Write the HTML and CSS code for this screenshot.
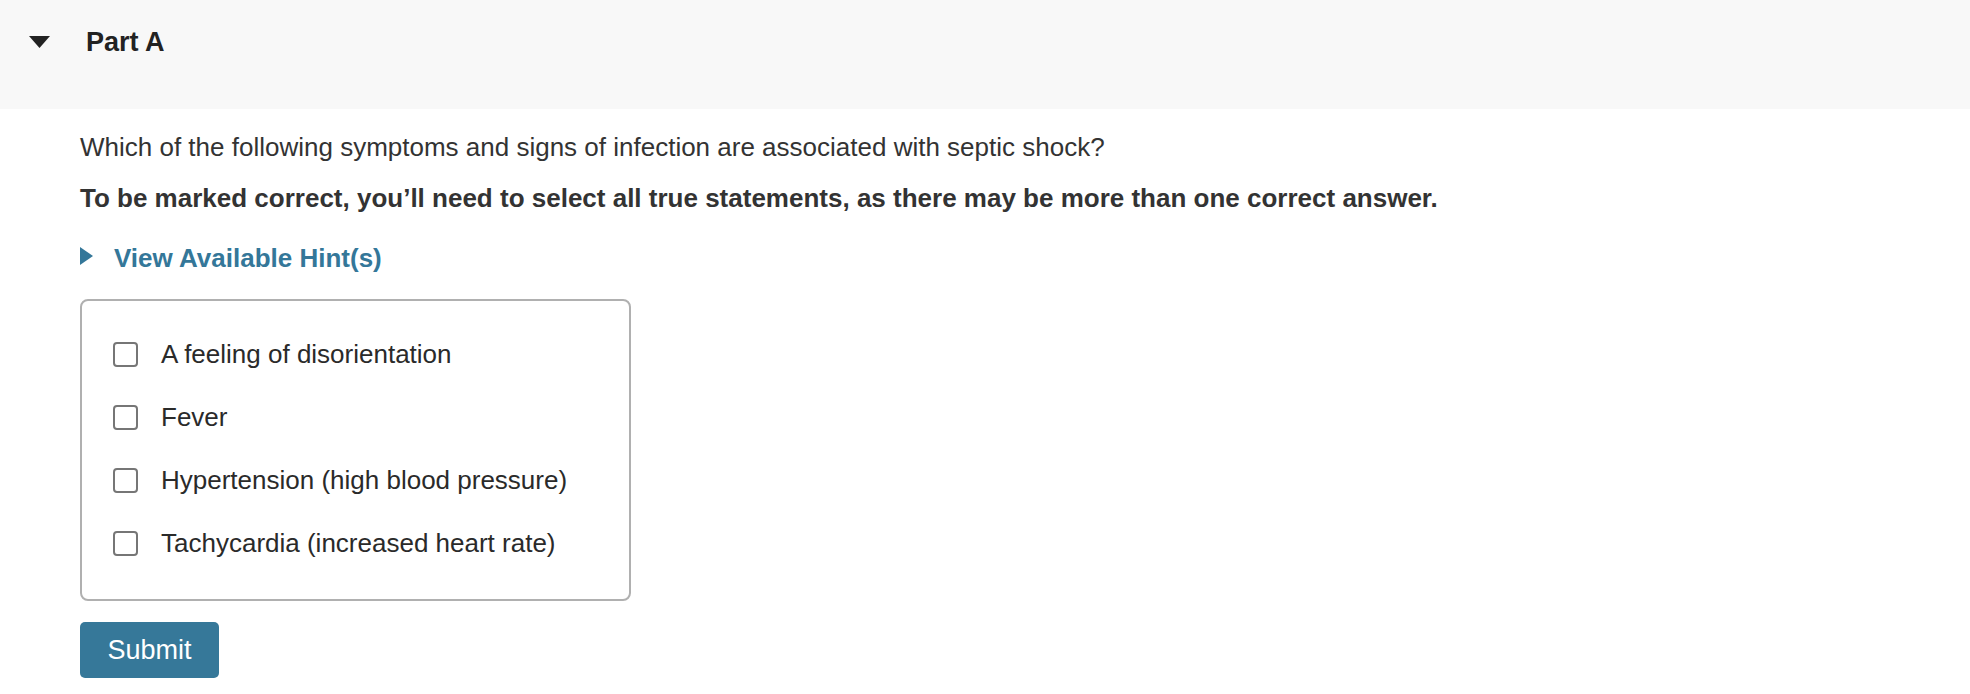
FILE: index.html
```html
<!DOCTYPE html>
<html lang="en">
<head>
<meta charset="utf-8">
<title>Part A</title>
<link rel="stylesheet" href="styles.css">
</head>
<body>
<div class="part-header">
  <svg class="caret-down" width="21" height="12" viewBox="0 0 21 12"><polygon points="0,0 21,0 10.5,12" fill="#222"/></svg>
  <h2 class="part-title">Part A</h2>
</div>
<div class="part-body">
  <p class="question">Which of the following symptoms and signs of infection are associated with septic shock?</p>
  <p class="instructions">To be marked correct, you’ll need to select all true statements, as there may be more than one correct answer.</p>
  <div class="hint-toggle">
    <svg class="caret-right" width="13" height="18" viewBox="0 0 13 18"><polygon points="0,0 13,9 0,18" fill="#347799"/></svg>
    <span class="hint-text">View Available Hint(s)</span>
  </div>
  <div class="choices">
    <label class="choice"><span class="box"></span><span class="choice-text">A feeling of disorientation</span></label>
    <label class="choice"><span class="box"></span><span class="choice-text">Fever</span></label>
    <label class="choice"><span class="box"></span><span class="choice-text">Hypertension (high blood pressure)</span></label>
    <label class="choice"><span class="box"></span><span class="choice-text">Tachycardia (increased heart rate)</span></label>
  </div>
  <button class="submit">Submit</button>
</div>
</body>
</html>
```
FILE: styles.css
```css
html, body {
  margin: 0;
  padding: 0;
  background: #ffffff;
  font-family: "Liberation Sans", Arial, Helvetica, sans-serif;
  color: #333333;
}

.part-header {
  height: 109px;
  background: #f8f8f8;
  display: flex;
  align-items: flex-start;
  box-sizing: border-box;
  padding-left: 29px;
}

.caret-down {
  margin-top: 36px;
  flex: none;
}

.part-title {
  margin: 0 0 0 36px;
  font-size: 27px;
  font-weight: bold;
  color: #222222;
  line-height: 36px;
  padding-top: 24px;
}

.part-body {
  padding-left: 80px;
}

.question {
  margin: 20px 0 0 0;
  font-size: 26px;
  line-height: 36px;
}

.instructions {
  margin: 15px 0 0 0;
  font-size: 26px;
  line-height: 36px;
  font-weight: bold;
}

.hint-toggle {
  margin-top: 24px;
  height: 36px;
  display: flex;
  align-items: center;
  gap: 21px;
}

.caret-right {
  flex: none;
  margin-top: -5px;
}

.hint-text {
  font-size: 26px;
  font-weight: bold;
  color: #347799;
  line-height: 36px;
}

.choices {
  margin-top: 23px;
  width: 551px;
  box-sizing: border-box;
  border: 2px solid #b0b0b0;
  border-radius: 8px;
  padding: 22px 0 24px 31px;
  display: flex;
  flex-direction: column;
}

.choice {
  height: 63px;
  display: flex;
  align-items: center;
  gap: 23px;
  font-size: 26px;
  color: #2a2a2a;
}

.box {
  width: 25px;
  height: 25px;
  box-sizing: border-box;
  border: 2px solid #767676;
  border-radius: 4px;
  background: #fff;
  flex: none;
}

.submit {
  margin-top: 21px;
  width: 139px;
  height: 56px;
  border: none;
  border-radius: 5px;
  background: #367899;
  color: #ffffff;
  font-family: "Liberation Sans", Arial, Helvetica, sans-serif;
  font-size: 27px;
  padding: 0;
}
```
